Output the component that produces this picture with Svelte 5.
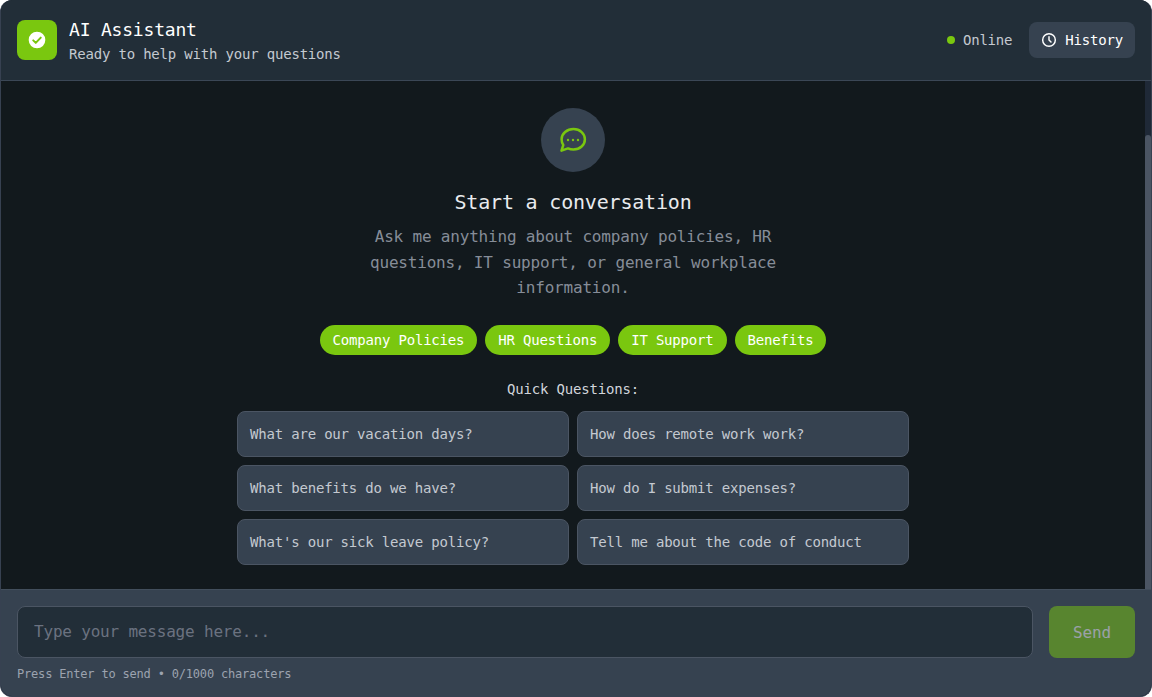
<script>
  const pills = ['Company Policies', 'HR Questions', 'IT Support', 'Benefits'];
  const questions = [
    'What are our vacation days?',
    'How does remote work work?',
    'What benefits do we have?',
    'How do I submit expenses?',
    "What's our sick leave policy?",
    'Tell me about the code of conduct'
  ];
</script>

<div class="app">
  <header class="top">
    <div class="brand">
      <div class="logo">
        <svg width="20" height="20" viewBox="0 0 24 24" aria-hidden="true">
          <circle cx="12" cy="12" r="10" fill="#fff" />
          <path d="M7.500 12.400l3 3 6-6.200" fill="none" stroke="#7ac70f" stroke-width="2.400" stroke-linecap="round" stroke-linejoin="round" />
        </svg>
      </div>
      <div class="brand-text">
        <h1>AI Assistant</h1>
        <p>Ready to help with your questions</p>
      </div>
    </div>
    <div class="actions">
      <span class="status"><i class="dot"></i>Online</span>
      <button class="history">
        <svg width="16" height="16" viewBox="0 0 24 24" fill="none" stroke="currentColor" stroke-width="2.200" stroke-linecap="round" stroke-linejoin="round" aria-hidden="true">
          <circle cx="12" cy="12" r="9.500" />
          <path d="M12 7v5l3 3" />
        </svg>
        History
      </button>
    </div>
  </header>

  <div class="middle">
    <main class="messages">
      <div class="bubble">
        <svg width="32" height="32" viewBox="0 0 32 32" fill="none" aria-hidden="true">
          <path d="M16.500 5.100C23 5.100 27.900 9.600 27.900 15.300S23 25.500 16.500 25.500C14.500 25.500 12.600 25.100 11 24.400L4.500 26.600L6.300 21C5 19.300 4.600 17.400 4.600 15.300C4.600 9.600 10 5.100 16.500 5.100Z" stroke="#7ac70f" stroke-width="2.500" stroke-linejoin="round" />
          <circle cx="11" cy="16" r="1.200" fill="#7ac70f" />
          <circle cx="16" cy="16" r="1.200" fill="#7ac70f" />
          <circle cx="21" cy="16" r="1.200" fill="#7ac70f" />
        </svg>
      </div>
      <h2>Start a conversation</h2>
      <p class="lead">Ask me anything about company policies, HR questions, IT support, or general workplace information.</p>
      <div class="pills">
        {#each pills as pill}
          <span class="pill">{pill}</span>
        {/each}
      </div>
      <h3>Quick Questions:</h3>
      <div class="grid">
        {#each questions as q}
          <button class="question">{q}</button>
        {/each}
      </div>
    </main>
    <div class="rail" aria-hidden="true"><div class="thumb"></div></div>
  </div>

  <footer class="composer">
    <div class="row">
      <input class="field" type="text" placeholder="Type your message here..." />
      <button class="send" disabled>Send</button>
    </div>
    <p class="hint">Press Enter to send • 0/1000 characters</p>
  </footer>
</div>

<style>
  :global(body) {
    margin: 0;
    background: #fff;
  }
  .app {
    box-sizing: border-box;
    height: 697px;
    display: flex;
    flex-direction: column;
    overflow: hidden;
    border: solid #374151;
    border-width: 0 1px 1px;
    border-radius: 12px;
    background: #111827;
    font-family: "DejaVu Sans Mono", "Liberation Mono", monospace;
    letter-spacing: -0.012em;
  }
  .top {
    flex: none;
    box-sizing: border-box;
    height: 81px;
    display: flex;
    align-items: center;
    justify-content: space-between;
    padding: 0 16px;
    background: #222e38;
    border-bottom: 1px solid #3b4756;
  }
  .brand {
    display: flex;
    align-items: center;
    gap: 12px;
  }
  .logo {
    width: 40px;
    height: 40px;
    border-radius: 8px;
    background: #7ac70f;
    display: flex;
    align-items: center;
    justify-content: center;
  }
  h1 {
    margin: 0;
    font-size: 18px;
    line-height: 28px;
    font-weight: 500;
    color: #fff;
  }
  .brand-text p {
    margin: 0;
    font-size: 14px;
    line-height: 20px;
    color: #c4c9d0;
  }
  .actions {
    display: flex;
    align-items: center;
    gap: 16px;
  }
  .status {
    display: flex;
    align-items: center;
    gap: 8px;
    padding-right: 1px;
    font-size: 14px;
    color: #c4c9d0;
  }
  .dot {
    width: 8px;
    height: 8px;
    border-radius: 50%;
    background: #7ac70f;
  }
  .history {
    display: flex;
    align-items: center;
    gap: 8px;
    height: 36px;
    padding: 0 12px;
    border: 0;
    border-radius: 8px;
    background: #364250;
    color: #fff;
    font: inherit;
    font-size: 14px;
    letter-spacing: inherit;
  }
  .middle {
    flex: 1;
    min-height: 0;
    display: flex;
    background: #12191d;
  }
  .messages {
    flex: 1;
    min-width: 0;
    display: flex;
    flex-direction: column;
    align-items: center;
    padding-top: 27px;
    text-align: center;
  }
  .rail {
    flex: none;
    width: 6px;
    background: #1f2937;
  }
  .thumb {
    height: 100%;
    margin-top: 54px;
    border-radius: 3px 3px 0 0;
    background: #4b5563;
  }
  .bubble {
    width: 64px;
    height: 64px;
    border-radius: 50%;
    background: #364250;
    display: flex;
    align-items: center;
    justify-content: center;
    margin-bottom: 16px;
  }
  h2 {
    margin: 0 0 8px;
    font-size: 20px;
    line-height: 28px;
    font-weight: 500;
    color: #e9ebee;
  }
  .lead {
    margin: 0 0 24px;
    width: 448px;
    font-size: 16px;
    line-height: 25.600px;
    color: #868d98;
  }
  .pills {
    display: flex;
    gap: 8px;
    margin-bottom: 24px;
  }
  .pill {
    padding: 0 13px;
    height: 30px;
    line-height: 30px;
    border-radius: 15px;
    background: #7ac70f;
    color: #fff;
    font-size: 14px;
    white-space: nowrap;
  }
  h3 {
    margin: 0 0 12px;
    font-size: 14px;
    line-height: 20px;
    font-weight: 500;
    color: #d1d5db;
  }
  .grid {
    display: grid;
    grid-template-columns: 1fr 1fr;
    gap: 8px;
    width: 672px;
  }
  .question {
    height: 46px;
    padding: 0 12px;
    border: 1px solid #4b5563;
    border-radius: 8px;
    background: #364250;
    color: #c4c9d0;
    font: inherit;
    font-size: 14px;
    letter-spacing: inherit;
    text-align: left;
  }
  .composer {
    flex: none;
    box-sizing: border-box;
    padding: 16px 16px 14px;
    background: #364250;
    border-top: 1px solid #424e5c;
  }
  .row {
    display: flex;
    gap: 16px;
  }
  .field {
    flex: 1;
    min-width: 0;
    box-sizing: border-box;
    height: 52px;
    padding: 0 16px 2px;
    border: 1px solid #4b5563;
    border-radius: 8px;
    background: #222e38;
    color: #fff;
    font: inherit;
    font-size: 16px;
    letter-spacing: inherit;
    outline: none;
  }
  .field::placeholder {
    color: #6b7280;
    opacity: 1;
  }
  .send {
    width: 86px;
    height: 52px;
    border: 0;
    border-radius: 8px;
    background: #7ac70f;
    color: #fff;
    font: inherit;
    font-size: 16px;
    letter-spacing: inherit;
    opacity: 0.5;
  }
  .hint {
    margin: 8px 0 0;
    font-size: 12px;
    line-height: 16px;
    color: #9ca3af;
  }
</style>
